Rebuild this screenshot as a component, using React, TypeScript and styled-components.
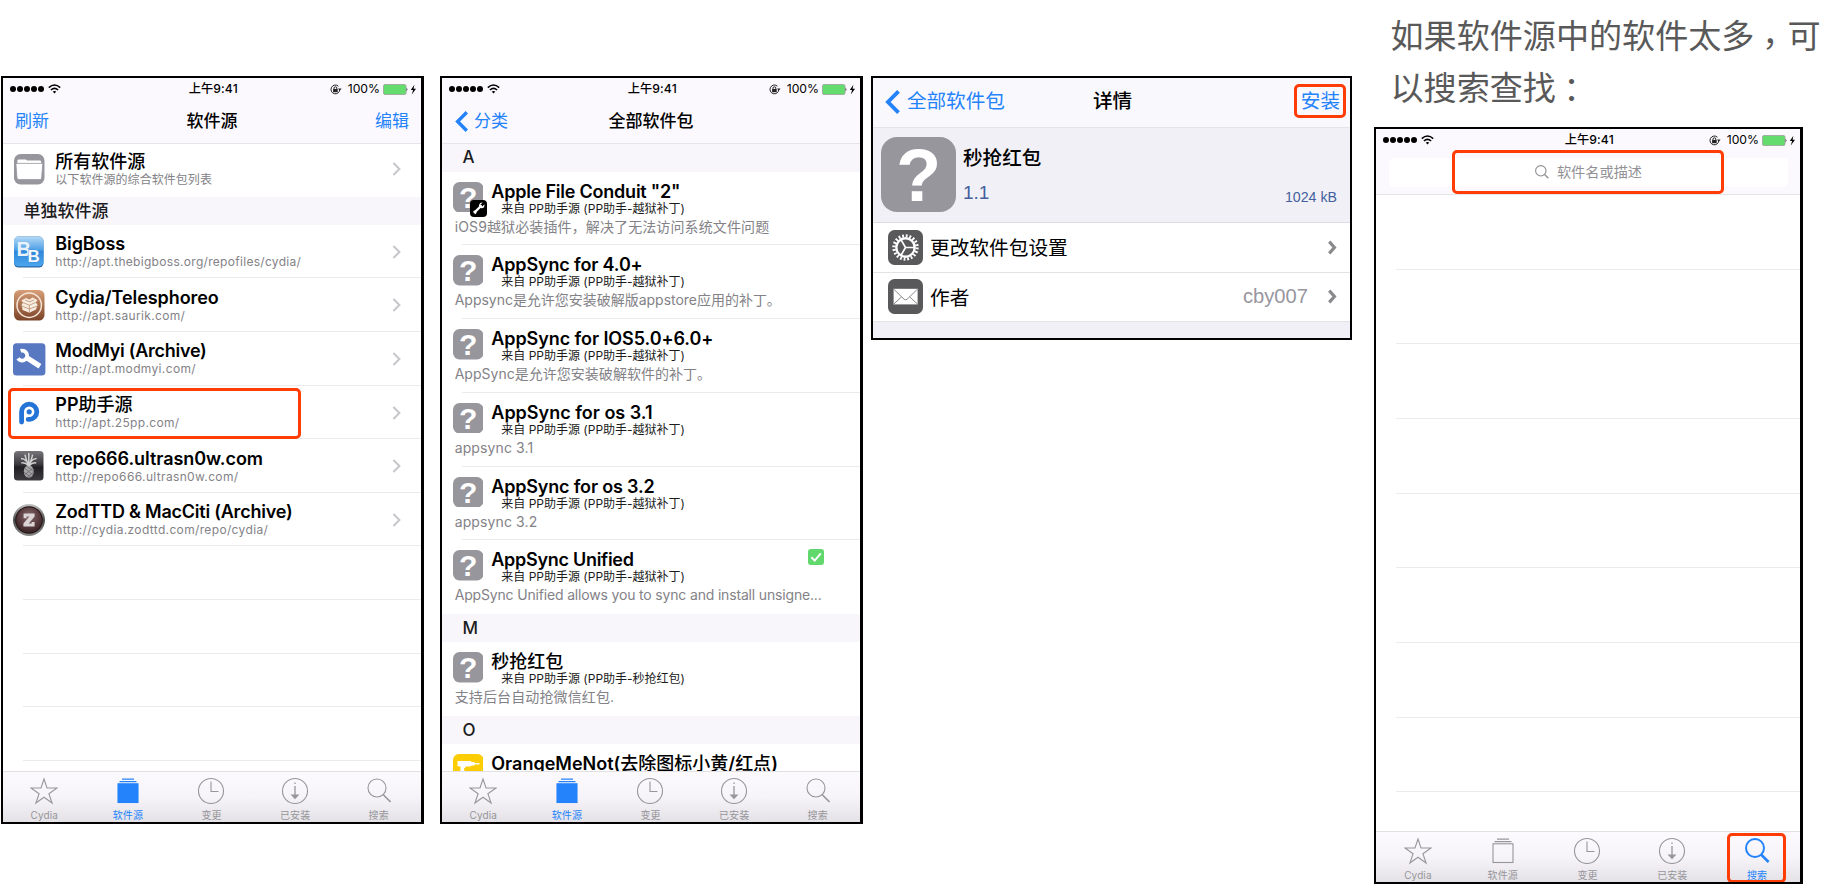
import React from 'react';
import styled, { createGlobalStyle, css } from 'styled-components';

const Global = createGlobalStyle`
  * { box-sizing: border-box; }
  html, body { margin: 0; padding: 0; background: #fff; overflow: hidden; }
  body { font-family: Inter, "Noto Sans CJK SC", sans-serif; color: #000; }
  svg { display: block; flex: none; }
`;

const BLUE = '#2483fb';
const RED = '#fe3c06';
const GREY = '#97969b';

const Page = styled.main`
  width: 1842px;
  height: 884px;
  display: flex;
  align-items: flex-start;
  padding-left: 1px;
  background: #fff;
`;

const Column = styled.section<{ $left?: number; $top?: number }>`
  flex: none;
  margin-left: ${p => p.$left ?? 0}px;
  padding-top: ${p => p.$top ?? 0}px;
`;

const Frame = styled.div<{ $w: number; $h: number; $bg?: string; $right?: number }>`
  position: relative;
  width: ${p => p.$w}px;
  height: ${p => p.$h}px;
  border: 2px solid #000;
  border-right-width: ${p => p.$right ?? 3}px;
  background: ${p => p.$bg ?? '#fff'};
  display: flex;
  flex-direction: column;
  overflow: hidden;
`;

const Highlight = styled.div<{ $x: number; $y: number; $w: number; $h: number }>`
  position: absolute;
  left: ${p => p.$x}px;
  top: ${p => p.$y}px;
  width: ${p => p.$w}px;
  height: ${p => p.$h}px;
  border: 3px solid ${RED};
  border-radius: 5px;
  pointer-events: none;
`;

/* ---------- status bar ---------- */

const StatusRow = styled.div`
  flex: none;
  height: 22px;
  display: grid;
  grid-template-columns: 1fr auto 1fr;
  align-items: center;
  padding: 0 4px 0 6.5px;
  font-size: 12.2px;
  line-height: 22px;
`;
const Signal = styled.div`
  display: flex;
  align-items: center;
  gap: 3px;
`;
const Clock = styled.span`
  font-weight: 500;
  letter-spacing: 0.1px;
`;
const Power = styled.div`
  display: flex;
  align-items: center;
  justify-content: flex-end;
`;
const Percent = styled.span`
  margin: 0 3px 0 6px;
  font-size: 12.2px;
`;

const StatusBar = () => (
  <StatusRow>
    <Signal>
      <svg width="35" height="8" viewBox="0 0 35 8">
        {[0, 1, 2, 3, 4].map(i => <circle key={i} cx={3 + i * 7} cy="4" r="3" />)}
      </svg>
      <svg width="13" height="10" viewBox="0 0 13 10" fill="none" stroke="#000" strokeWidth="1.6">
        <path d="M0.8 3.6 Q6.5 -1.6 12.2 3.6" />
        <path d="M2.9 6 Q6.5 2.7 10.1 6" />
        <path d="M6.5 9.6 L4.7 7.6 Q6.5 6.2 8.3 7.6 Z" fill="#000" stroke="none" />
      </svg>
    </Signal>
    <Clock>上午9:41</Clock>
    <Power>
      <svg width="12" height="11" viewBox="0 0 12 11">
        <path d="M9.8 5.5 A4.4 4.4 0 1 1 8.4 2.2" fill="none" stroke="#222" strokeWidth="1" />
        <path d="M8 4.4 L11.6 4.4 L9.8 6.8 Z" fill="#222" />
        <rect x="3.1" y="5" width="4.6" height="3.2" fill="#222" />
        <path d="M4 5 V4 Q4 2.8 5.4 2.8 Q6.8 2.8 6.8 4 V5" fill="none" stroke="#222" />
      </svg>
      <Percent>100%</Percent>
      <svg width="34" height="11" viewBox="0 0 34 11">
        <rect x="0.5" y="0.5" width="22.5" height="10" rx="1.5" fill="#64dc6e" stroke="#9aa09a" strokeWidth="0.8" />
        <path d="M23.6 3.6 Q25.4 5.5 23.6 7.4 Z" fill="#111" />
        <path d="M31.4 0.8 L27.8 6 H30.1 L28.8 10.4 L33 4.8 H30.6 Z" fill="#000" />
      </svg>
    </Power>
  </StatusRow>
);

/* ---------- navigation bar ---------- */

const Header = styled.header<{ $h: number; $bg?: string }>`
  flex: none;
  height: ${p => p.$h}px;
  background: ${p => p.$bg ?? '#fbf9fd'};
  border-bottom: 1.5px solid #e6e4ea;
  display: flex;
  flex-direction: column;
`;
const NavRow = styled.div<{ $size: number; $h: number; $pad: string }>`
  height: ${p => p.$h}px;
  padding: ${p => p.$pad};
  display: grid;
  grid-template-columns: 1fr auto 1fr;
  align-items: center;
  font-size: ${p => p.$size}px;
  line-height: ${p => p.$h}px;
`;
const NavTitle = styled.h1`
  margin: 0;
  font-size: inherit;
  font-weight: 500;
`;
const NavAction = styled.a<{ $end?: boolean; $gap?: number }>`
  color: ${BLUE};
  display: flex;
  align-items: center;
  gap: ${p => p.$gap ?? 0}px;
  justify-content: ${p => (p.$end ? 'flex-end' : 'flex-start')};
`;

const BackArrow = ({ h }: { h: number }) => (
  <svg width={h * 0.62} height={h} viewBox="0 0 13 21" fill="none" stroke={BLUE} strokeWidth="3.4">
    <path d="M11.8 1.2 L2.6 10.5 L11.8 19.8" />
  </svg>
);

const Chevron = ({ w = 9, h = 14, color = '#c7c6cb', stroke = 2 }) => (
  <svg width={w} height={h} viewBox={`0 0 ${w} ${h}`} fill="none" stroke={color} strokeWidth={stroke}>
    <path d={`M${stroke * 0.7} ${stroke * 0.5} L${w - stroke * 0.8} ${h / 2} L${stroke * 0.7} ${h - stroke * 0.5}`} />
  </svg>
);

/* ---------- tab bar ---------- */

const TabRow = styled.nav<{ $h: number }>`
  flex: none;
  height: ${p => p.$h}px;
  margin-top: auto;
  display: grid;
  grid-template-columns: repeat(5, 1fr);
  border-top: 1.5px solid #e2e0e4;
  background: linear-gradient(#fcfafd, #f6f4f8 50%, #e4e2e6);
`;
const Tab = styled.div<{ $active?: boolean }>`
  display: flex;
  flex-direction: column;
  align-items: center;
  padding: 5px 1px 0 0;
  color: ${p => (p.$active ? BLUE : GREY)};
  font-size: 10px;
  line-height: 14px;
  span { margin-top: 3px; letter-spacing: 0.1px; }
`;

type TabKey = 'star' | 'sources' | 'changes' | 'installed' | 'search';

const TabIcon = ({ kind, active }: { kind: TabKey; active: boolean }) => (
  <svg width="28" height="28" viewBox="0 0 28 28" fill="none" stroke="currentColor" strokeWidth="1.1">
    {kind === 'star' && (
      <path d="M14 2 L17 11 H27 L18.9 16.7 L22.1 26 L14 20.2 L5.9 26 L9.1 16.7 L1 11 H11 Z" />
    )}
    {kind === 'sources' && (
      <>
        <path d="M8 2.2 H20 M5.5 4.6 H22.5" strokeWidth="1.3" />
        <rect x="4" y="6.8" width="20" height="18.7" fill={active ? 'currentColor' : 'none'} />
      </>
    )}
    {kind === 'changes' && (
      <>
        <circle cx="14" cy="14" r="12.5" />
        <path d="M14 4.5 V14.5 H21.5" />
      </>
    )}
    {kind === 'installed' && (
      <>
        <circle cx="14" cy="14" r="12.5" />
        <path d="M14 5.5 V7 M14 9 V18" strokeWidth="1.3" />
        <path d="M9.5 17.4 H18.5 L14 22.2 Z" fill="currentColor" stroke="none" />
      </>
    )}
    {kind === 'search' && (
      <>
        <circle cx="12" cy="11" r="9" strokeWidth={active ? 2 : 1.1} />
        <path d="M18 17.5 L25.6 25" strokeWidth={active ? 2.6 : 1.7} />
      </>
    )}
  </svg>
);

const TABS: { key: TabKey; label: string }[] = [
  { key: 'star', label: 'Cydia' },
  { key: 'sources', label: '软件源' },
  { key: 'changes', label: '变更' },
  { key: 'installed', label: '已安装' },
  { key: 'search', label: '搜索' },
];

const TabBar = ({ active, height }: { active: TabKey; height: number }) => (
  <TabRow $h={height}>
    {TABS.map(t => (
      <Tab key={t.key} $active={t.key === active}>
        <TabIcon kind={t.key} active={t.key === active} />
        <span>{t.label}</span>
      </Tab>
    ))}
  </TabRow>
);

/* ---------- lists ---------- */

const List = styled.div`
  flex: 1;
  min-height: 0;
  overflow: hidden;
`;
const SectionHead = styled.h2<{ $h: number }>`
  margin: 0;
  height: ${p => p.$h}px;
  padding: 0 0 0 20.5px;
  background: #f8f6fa;
  font-size: 17px;
  font-weight: 500;
  line-height: ${p => p.$h}px;
  color: #1c1c1e;
`;
const inset = css<{ $line?: boolean }>`
  background: ${p =>
    p.$line === false ? 'none' : 'linear-gradient(#ebebed, #ebebed) 20px 100% / 100% 1.2px no-repeat'};
`;
const SourceRow = styled.div<{ $h: number; $line?: boolean; $lift?: number }>`
  height: ${p => p.$h}px;
  display: flex;
  align-items: center;
  padding: 0 20px ${p => p.$lift ?? 0}px 0;
  ${inset}
`;
const IconSlot = styled.div`
  width: 52.3px;
  padding-left: 10px;
`;
const SourceText = styled.div`
  flex: 1;
  display: flex;
  flex-direction: column;
  white-space: nowrap;
`;
const RowTitle = styled.div<{ $ls?: number }>`
  font-size: 18px;
  font-weight: 600;
  line-height: 20px;
  white-space: nowrap;
  letter-spacing: ${p => p.$ls ?? 0}px;
`;
const Han = styled.span`
  font-weight: 500;
  letter-spacing: 0;
`;
const SourceUrl = styled.div<{ $ls?: number }>`
  font-size: 12px;
  line-height: 15px;
  color: #838287;
  letter-spacing: ${p => p.$ls ?? 0.35}px;
`;
const BlankRow = styled.div<{ $h: number; $line?: boolean }>`
  height: ${p => p.$h}px;
  ${inset}
`;

/* Han runs take a lighter weight than the Latin text beside them. */
const Mixed = ({ text }: { text: string }) => (
  <>
    {text.split(/([\u4e00-\u9fff]+)/).map((run, i) =>
      i % 2 ? <Han key={i}>{run}</Han> : run
    )}
  </>
);

type SourceKind = 'folder' | 'bigboss' | 'cydia' | 'modmyi' | 'pp' | 'pineapple' | 'zod';

const SourceIcon = ({ kind }: { kind: SourceKind }) => (
  <svg width="34" height="34" viewBox="0 0 34 34">
    <defs>
      <linearGradient id="bb" x1="0" y1="0" x2="0" y2="1">
        <stop offset="0" stopColor="#b4d9f6" /><stop offset="0.45" stopColor="#4da0e6" />
        <stop offset="0.5" stopColor="#2f87da" /><stop offset="1" stopColor="#4ba6ee" />
      </linearGradient>
      <linearGradient id="cy" x1="0" y1="0" x2="0" y2="1">
        <stop offset="0" stopColor="#d79e78" /><stop offset="1" stopColor="#7b4327" />
      </linearGradient>
      <linearGradient id="pa" x1="0" y1="0" x2="0" y2="1">
        <stop offset="0" stopColor="#77757a" /><stop offset="0.45" stopColor="#3b393d" />
        <stop offset="0.55" stopColor="#211f23" /><stop offset="1" stopColor="#3d3b3f" />
      </linearGradient>
      <radialGradient id="zo" cx="0.5" cy="0.35" r="0.65">
        <stop offset="0" stopColor="#806a6b" /><stop offset="0.6" stopColor="#5a3c3f" /><stop offset="1" stopColor="#3a2426" />
      </radialGradient>
      <linearGradient id="zr" x1="0" y1="0" x2="0" y2="1">
        <stop offset="0" stopColor="#c5c5c5" /><stop offset="0.5" stopColor="#4b4b4b" /><stop offset="1" stopColor="#8a8a8a" />
      </linearGradient>
    </defs>
    {kind === 'folder' && (
      <>
        <rect x="1" y="2" width="30.5" height="30.5" rx="6.5" fill="#98969d" />
        <path d="M4.4 12 V8.8 Q4.4 7.4 5.8 7.4 H12.4 Q13.4 7.4 14 8.6 H26.6 Q28.2 8.6 28.2 10 V12 Z" fill="#fff" />
        <path d="M2.9 11.4 H29.8 L28.6 26 Q28.4 27.6 27 27.6 H5.8 Q4.2 27.6 4 26 Z" fill="#fff" stroke="#98969d" strokeWidth="0.8" />
      </>
    )}
    {kind === 'bigboss' && (
      <>
        <rect x="1" y="1.6" width="29.5" height="31" rx="4.5" fill="#2b6aa5" />
        <rect x="1" y="1.6" width="29.5" height="29.6" rx="4.5" fill="url(#bb)" />
        <text x="3.6" y="20.6" fontSize="20" fontWeight="700" fontFamily="Liberation Sans" fill="#e9f2fa">B</text>
        <text x="14.6" y="27.2" fontSize="17" fontWeight="700" fontFamily="Liberation Sans" fill="#f2f7fb" stroke="#3b87c9" strokeWidth="0.7" paintOrder="stroke">B</text>
      </>
    )}
    {kind === 'cydia' && (
      <>
        <rect x="1" y="2" width="30.5" height="30.5" rx="5.5" fill="url(#cy)" />
        <circle cx="16.2" cy="17.2" r="12.2" fill="none" stroke="#f6e6d8" strokeWidth="1.5" />
        <path d="M8.4 12.6 L13 10 L16.4 11.4 L19.6 9.6 L24.4 12 L22.8 14.4 L24.6 17 L23 21.6 L16.4 24.8 L9.6 22 L8.6 17 L10 14.6 Z" fill="#f7ecdf" />
        <path d="M10 14.6 L16.4 17.2 L22.8 14.4 M9 18.2 L16.4 21 L24 18.2 M16.4 17.4 V24.6 M12 12 L16.4 13.8 L21 12" fill="none" stroke="#b98f72" strokeWidth="0.8" />
      </>
    )}
    {kind === 'modmyi' && (
      <>
        <rect x="0" y="1.2" width="32.4" height="32.4" rx="3.5" fill="#5878c1" />
        <path d="M7.6 8.8 A5 5 0 1 1 5 16.4" fill="none" stroke="#fff" strokeWidth="3.8" />
        <path d="M13 15.2 L27 24.2" stroke="#fff" strokeWidth="5.2" />
      </>
    )}
    {kind === 'pp' && (
      <>
        <path d="M8.6 26.6 V16.4 A7.6 7.6 0 1 1 16.2 24 H15.2" fill="none" stroke="#2474d8" strokeWidth="4.8" strokeLinecap="round" transform="translate(0 -0.6)" />
        <circle cx="16.2" cy="15.8" r="2.6" fill="#2474d8" />
      </>
    )}
    {kind === 'pineapple' && (
      <>
        <rect x="1" y="2" width="29.5" height="29.5" rx="3.5" fill="url(#pa)" />
        <ellipse cx="15.8" cy="22.5" rx="5" ry="6.2" fill="#a5a4a6" />
        <path d="M11.5 19 L20 26 M11 23 L18 28.4 M13.6 17 L20.8 22.6 M20 19 L11.6 26 M20.6 23 L14 28.4" stroke="#636266" strokeWidth="0.7" />
        <path d="M15.8 17 Q14 10 8 9.6 M15.8 17 Q12 13 8.4 14 M15.8 17 Q17.6 10 23.6 9.6 M15.8 17 Q19.6 13 23.2 14 M15.8 17 Q12.6 9 12 5.6 M15.8 17 Q19 9 19.6 5.6 M15.8 17 V4" stroke="#d0d0d0" strokeWidth="1.5" fill="none" />
      </>
    )}
    {kind === 'zod' && (
      <>
        <circle cx="16" cy="17" r="16" fill="url(#zr)" />
        <circle cx="16" cy="17" r="13.8" fill="#241416" />
        <circle cx="16" cy="17" r="12.8" fill="url(#zo)" />
        <path d="M10.6 10.4 H21.6 V13.4 L15.8 20.4 H18.6 V19 H21.6 V23.6 H10.4 V20.6 L16.4 13.6 H13.6 V15.2 H10.6 Z" fill="#dcd4d4" />
      </>
    )}
  </svg>
);

const SOURCES: { kind: SourceKind; name: string; url: string; ls?: number; uls?: number }[] = [
  { kind: 'bigboss', name: 'BigBoss', url: 'http://apt.thebigboss.org/repofiles/cydia/', ls: -0.1, uls: 0.3 },
  { kind: 'cydia', name: 'Cydia/Telesphoreo', url: 'http://apt.saurik.com/', ls: -0.07 },
  { kind: 'modmyi', name: 'ModMyi (Archive)', url: 'http://apt.modmyi.com/', ls: -0.27 },
  { kind: 'pp', name: 'PP助手源', url: 'http://apt.25pp.com/' },
  { kind: 'pineapple', name: 'repo666.ultrasn0w.com', url: 'http://repo666.ultrasn0w.com/', ls: -0.06 },
  { kind: 'zod', name: 'ZodTTD & MacCiti (Archive)', url: 'http://cydia.zodttd.com/repo/cydia/', ls: -0.22 },
];

const SourcesScreen = () => (
  <Frame $w={423} $h={748}>
    <Header $h={66}>
      <StatusBar />
      <NavRow $size={17} $h={42} $pad="0 12px">
        <NavAction>刷新</NavAction>
        <NavTitle>软件源</NavTitle>
        <NavAction $end>编辑</NavAction>
      </NavRow>
    </Header>
    <List>
      <SourceRow $h={53} $line={false} $lift={3}>
        <IconSlot><SourceIcon kind="folder" /></IconSlot>
        <SourceText>
          <RowTitle><Mixed text="所有软件源" /></RowTitle>
          <SourceUrl $ls={0.05}>以下软件源的综合软件包列表</SourceUrl>
        </SourceText>
        <Chevron />
      </SourceRow>
      <SectionHead $h={28}>单独软件源</SectionHead>
      {SOURCES.map(s => (
        <SourceRow key={s.name} $h={53.6}>
          <IconSlot><SourceIcon kind={s.kind} /></IconSlot>
          <SourceText>
            <RowTitle $ls={s.ls}><Mixed text={s.name} /></RowTitle>
            <SourceUrl $ls={s.uls}>{s.url}</SourceUrl>
          </SourceText>
          <Chevron />
        </SourceRow>
      ))}
      {[0, 1, 2, 3].map(i => <BlankRow key={i} $h={53.6} />)}
    </List>
    <TabBar active="sources" height={51} />
    <Highlight $x={5} $y={310} $w={293} $h={51} />
  </Frame>
);

/* ---------- packages ---------- */

const PackageRow = styled.div<{ $line?: boolean }>`
  height: 73.8px;
  padding: 10px 36px 0 10.7px;
  display: grid;
  grid-template-columns: 38.6px 1fr auto;
  grid-template-rows: 35px 20px;
  ${inset}
`;
const PackageIcon = styled.div`
  position: relative;
  width: 30.5px;
  height: 30.5px;
`;
const Badge = styled.div`
  position: absolute;
  left: 17.5px;
  top: 18px;
`;
const PackageOrigin = styled.div`
  padding-left: 10px;
  font-size: 12px;
  line-height: 14px;
  color: #1b1b1b;
  white-space: nowrap;
`;
const PackageNote = styled.div<{ $ls?: number }>`
  grid-column: 1 / -1;
  padding-left: 2px;
  font-size: 14px;
  line-height: 20px;
  color: #838287;
  white-space: nowrap;
  letter-spacing: ${p => p.$ls ?? 0.12}px;
`;

const Unknown = ({ size }: { size: number }) => (
  <svg width={size} height={size} viewBox="0 0 75 75">
    <rect width="75" height="75" rx="16" fill="#98969d" />
    <text x="37.5" y="63.5" textAnchor="middle" fontFamily="Liberation Sans" fontWeight="700" fontSize="74" fill="#fff">?</text>
  </svg>
);
const Drill = () => (
  <svg width="30.5" height="30.5" viewBox="0 0 30.5 30.5">
    <rect width="30.5" height="30.5" rx="6" fill="#fccc04" />
    <path d="M4.5 7 H17 L19 8 H21.5 V9 H26.4 V10.4 H21.5 V11.6 H19 L17 12.6 H12.6 L12 14 H11 L12.4 23 H7 L7.6 12.6 H6 L4.5 12 Z" fill="#fff" />
  </svg>
);
const WrenchBadge = () => (
  <svg width="17" height="17" viewBox="0 0 17 17">
    <rect width="17" height="17" rx="4" fill="#000" />
    <path d="M4.6 12.4 L11 6" stroke="#fff" strokeWidth="2.2" strokeLinecap="round" />
    <path d="M12.6 2.6 L10.4 4.8 L12.2 6.6 L14.4 4.4 Q15 8 11.6 8.2 Q8.6 7.8 9 5 Q9.8 2.4 12.6 2.6 Z" fill="#fff" />
    <path d="M2.6 12.2 Q3.4 10 6 10.6 Q7.4 13.4 4.8 14.6 L5.2 12.6 L4 11.6 Z" fill="#fff" />
  </svg>
);
const InstalledMark = () => (
  <svg width="16" height="16" viewBox="0 0 16 16">
    <rect width="16" height="16" rx="3" fill="#61d86c" />
    <path d="M3.4 8.2 L6.7 11.6 L12.8 4.4" fill="none" stroke="#fff" strokeWidth="2" />
  </svg>
);
const MarkSlot = styled.div`
  margin-top: -1px;
`;

interface Pkg {
  name: string;
  origin?: string;
  note?: string;
  wrench?: boolean;
  mark?: boolean;
  drill?: boolean;
  ls?: number;
  nls?: number;
  last?: boolean;
}

const PATCH = '来自 PP助手源 (PP助手-越狱补丁)';

const GROUPS: { letter: string; items: Pkg[] }[] = [
  {
    letter: 'A',
    items: [
      { name: 'Apple File Conduit "2"', origin: PATCH, note: 'iOS9越狱必装插件，解决了无法访问系统文件问题', wrench: true, ls: -0.22 },
      { name: 'AppSync for 4.0+', origin: PATCH, note: 'Appsync是允许您安装破解版appstore应用的补丁。', ls: -0.15, nls: -0.02 },
      { name: 'AppSync for IOS5.0+6.0+', origin: PATCH, note: 'AppSync是允许您安装破解软件的补丁。', ls: -0.08, nls: 0.02 },
      { name: 'AppSync for os 3.1', origin: PATCH, note: 'appsync 3.1' },
      { name: 'AppSync for os 3.2', origin: PATCH, note: 'appsync 3.2', ls: -0.18 },
      { name: 'AppSync Unified', origin: PATCH, note: 'AppSync Unified allows you to sync and install unsigne...', mark: true, last: true, ls: -0.28, nls: -0.17 },
    ],
  },
  { letter: 'M', items: [{ name: '秒抢红包', origin: '来自 PP助手源 (PP助手-秒抢红包)', note: '支持后台自动抢微信红包.', last: true }] },
  { letter: 'O', items: [{ name: 'OrangeMeNot(去除图标小黄/红点)', drill: true, last: true }] },
];

const PackagesScreen = () => (
  <Frame $w={423} $h={748}>
    <Header $h={66}>
      <StatusBar />
      <NavRow $size={17} $h={42} $pad="0 13px">
        <NavAction $gap={6}><BackArrow h={21} />分类</NavAction>
        <NavTitle>全部软件包</NavTitle>
      </NavRow>
    </Header>
    <List>
      {GROUPS.map((g, i) => (
        <React.Fragment key={g.letter}>
          <SectionHead $h={i === 0 ? 27.5 : 28.2}>{g.letter}</SectionHead>
          {g.items.map(p => (
            <PackageRow key={p.name} $line={!p.last}>
              <PackageIcon>
                {p.drill ? <Drill /> : <Unknown size={30.5} />}
                {p.wrench && <Badge><WrenchBadge /></Badge>}
              </PackageIcon>
              <div>
                <RowTitle $ls={p.ls}><Mixed text={p.name} /></RowTitle>
                <PackageOrigin>{p.origin}</PackageOrigin>
              </div>
              <MarkSlot>{p.mark && <InstalledMark />}</MarkSlot>
              <PackageNote $ls={p.nls}>{p.note}</PackageNote>
            </PackageRow>
          ))}
        </React.Fragment>
      ))}
    </List>
    <TabBar active="sources" height={51} />
  </Frame>
);

/* ---------- package details ---------- */

const Summary = styled.div`
  flex: none;
  height: 95px;
  padding: 9px 13px 0 8px;
  display: flex;
  border-bottom: 1px solid #dedce2;
  color: #43609c;
  font-family: "Liberation Sans", "Noto Sans CJK SC", sans-serif;
`;
const SummaryText = styled.div`
  flex: 1;
  padding: 7.5px 0 0 7px;
`;
const SummaryName = styled.div`
  color: #000;
  font-size: 19.6px;
  font-weight: 500;
  line-height: 26px;
`;
const Version = styled.div`
  margin-top: 9px;
  font-size: 19px;
  line-height: 26px;
`;
const Size = styled.div`
  margin-top: 50px;
  font-size: 14.2px;
  line-height: 20px;
`;
const DetailRow = styled.div`
  flex: none;
  height: 49.5px;
  padding: 0 13.5px 0 15px;
  display: flex;
  align-items: center;
  background: #fff;
  border-bottom: 1.4px solid #e3e2e6;
  font-size: 19.7px;
`;
const DetailLabel = styled.span`
  flex: 1;
  padding: 0 0 1.5px 7px;
`;
const DetailValue = styled.span`
  margin-right: 18.5px;
  color: #98969f;
  font-family: "Liberation Sans", sans-serif;
  font-size: 20.2px;
`;

const Gear = () => (
  <svg width="35" height="35" viewBox="0 0 35 35">
    <rect width="35" height="35" rx="6.5" fill="#59585b" />
    <circle cx="17.5" cy="17.5" r="11.6" fill="none" stroke="#fff" strokeWidth="3.2" strokeDasharray="1.8 1.84" />
    <circle cx="17.5" cy="17.5" r="9.2" fill="none" stroke="#fff" strokeWidth="2.4" />
    <path d="M17.5 17.5 H26 M17.5 17.5 L13.2 10 M17.5 17.5 L13.2 25" stroke="#fff" strokeWidth="1.6" />
  </svg>
);
const Mail = () => (
  <svg width="35" height="35" viewBox="0 0 35 35">
    <rect width="35" height="35" rx="6.5" fill="#59585b" />
    <rect x="5.6" y="9.8" width="24" height="15.6" fill="#fff" />
    <path d="M5.6 10 L16 20.2 Q17.6 21.6 19.2 20.2 L29.6 10 M5.6 25.2 L13.6 17.8 M29.6 25.2 L21.6 17.8" fill="none" stroke="#8a898c" strokeWidth="1" />
  </svg>
);

const DetailsScreen = () => (
  <Frame $w={481} $h={264} $bg="#f2f0f7" $right={2}>
    <Header $h={50} $bg="#f9f8fc">
      <NavRow $size={19.6} $h={47} $pad="0 10px 0 12px">
        <NavAction $gap={7}><BackArrow h={24} />全部软件包</NavAction>
        <NavTitle>详情</NavTitle>
        <NavAction $end>安装</NavAction>
      </NavRow>
    </Header>
    <Summary>
      <Unknown size={75} />
      <SummaryText>
        <SummaryName>秒抢红包</SummaryName>
        <Version>1.1</Version>
      </SummaryText>
      <Size>1024 kB</Size>
    </Summary>
    <DetailRow>
      <Gear />
      <DetailLabel>更改软件包设置</DetailLabel>
      <Chevron w={10} h={15} color="#8a898c" stroke={3.2} />
    </DetailRow>
    <DetailRow>
      <Mail />
      <DetailLabel>作者</DetailLabel>
      <DetailValue>cby007</DetailValue>
      <Chevron w={10} h={15} color="#8a898c" stroke={3.2} />
    </DetailRow>
    <Highlight $x={421} $y={6} $w={52} $h={34} />
  </Frame>
);

/* ---------- search ---------- */

const Caption = styled.p`
  margin: 0;
  width: 440px;
  height: 127px;
  padding: 9px 0 0 16.5px;
  font-family: "Noto Sans CJK SC", sans-serif;
  font-size: 33.1px;
  line-height: 51.5px;
  color: #595959;
  white-space: nowrap;
`;
const Stop = styled.span<{ $dx: number; $dy: number }>`
  position: relative;
  left: ${p => p.$dx}px;
  top: ${p => p.$dy}px;
  font-family: "Noto Sans CJK TC", sans-serif;
`;
const SearchField = styled.div`
  margin: 7px 12px 0 13px;
  height: 29px;
  padding-bottom: 3px;
  border-radius: 5px;
  background: #fff;
  display: flex;
  align-items: center;
  justify-content: center;
  gap: 8px;
  font-size: 14.2px;
  color: #909095;
  svg { margin-top: 2px; }
`;

const SearchScreen = () => (
  <Frame $w={429} $h={757}>
    <Header $h={66}>
      <StatusBar />
      <SearchField>
        <svg width="14" height="14" viewBox="0 0 14 14" fill="none" stroke="#909095" strokeWidth="1.1">
          <circle cx="5.8" cy="5.8" r="5.2" />
          <path d="M9.6 9.6 L13.4 13.2" strokeWidth="1.4" />
        </svg>
        软件名或描述
      </SearchField>
    </Header>
    <List>
      {[0, 1, 2, 3, 4, 5, 6, 7].map(i => <BlankRow key={i} $h={74.7} />)}
    </List>
    <TabBar active="search" height={51} />
    <Highlight $x={76} $y={21} $w={272} $h={43.5} />
    <Highlight $x={351} $y={703.5} $w={59} $h={50.5} />
  </Frame>
);

export default function App() {
  return (
    <>
      <Global />
      <Page>
        <Column $top={76}><SourcesScreen /></Column>
        <Column $top={76} $left={16}><PackagesScreen /></Column>
        <Column $top={76} $left={8}><DetailsScreen /></Column>
        <Column $left={22}>
          <Caption>
            如果软件源中的软件太多<Stop $dx={-1} $dy={8}>，</Stop>可<br />以搜索查找<Stop $dx={-1} $dy={2}>：</Stop>
          </Caption>
          <SearchScreen />
        </Column>
      </Page>
    </>
  );
}
